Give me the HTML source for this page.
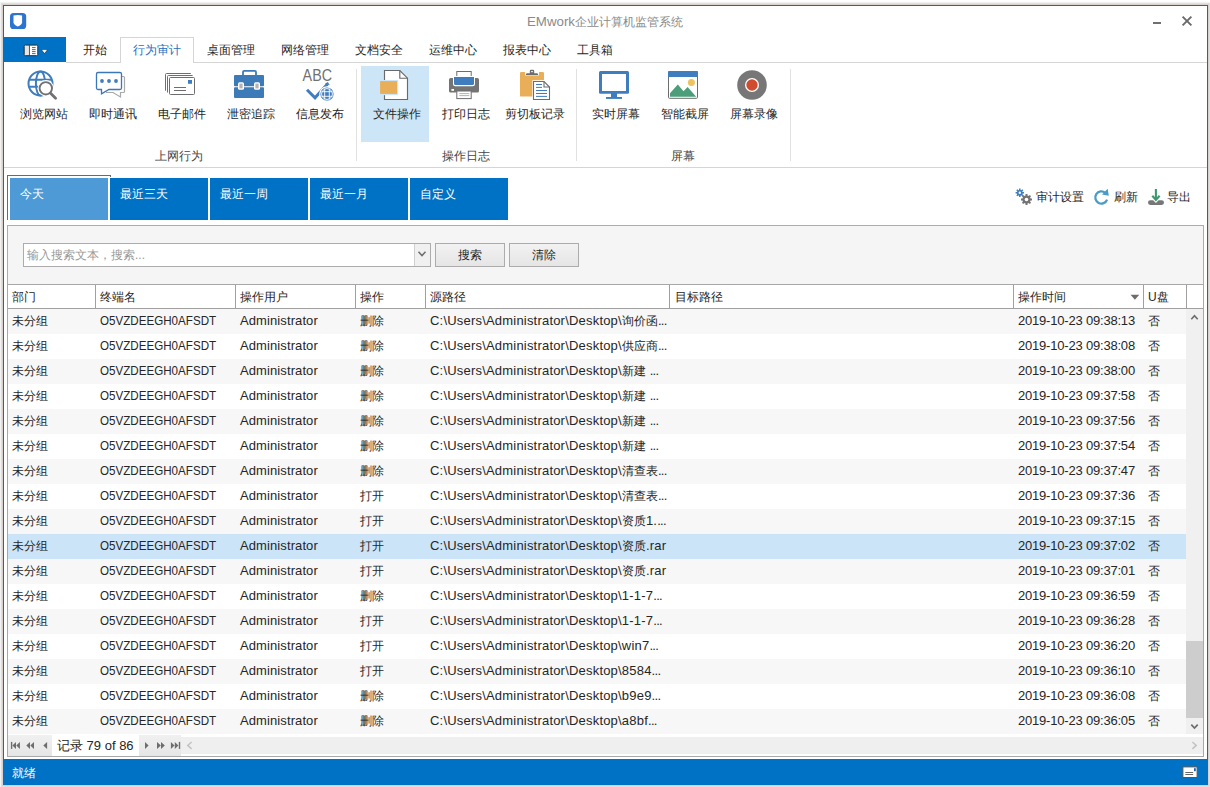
<!DOCTYPE html>
<html><head><meta charset="utf-8">
<style>
*{box-sizing:border-box;margin:0;padding:0}
html,body{width:1210px;height:787px;overflow:hidden;background:#fff}
body{position:relative;font-family:"Liberation Sans",sans-serif;font-size:12px;color:#262626}
.a{position:absolute}
#win{position:absolute;left:3px;top:5px;width:1205px;height:780px;border:1px solid #0072c6;background:#fff;box-shadow:0 0 0 1px #d8d1cd,0 0 0 2px #e0dfde,0 0 1px 3px rgba(0,0,0,.05)}
.t{position:absolute;white-space:nowrap;line-height:14px}
.tab{position:absolute;top:50px;transform:translateY(-50%)}
.rbtn{position:absolute;top:108px;white-space:nowrap;line-height:12px}
.glab{position:absolute;top:150px;line-height:12px;color:#444}
.sep{position:absolute;top:69px;width:1px;height:92px;background:#e1e1e1}
.dtab{position:absolute;top:178px;height:42px;background:#0072c6;color:#fff;padding:9px 0 0 10px;line-height:14px}
.row{position:absolute;left:8px;width:1178px;height:25px}
.row.g{background:#f7f7f7}
.row.s{background:#cce4f7}
.c{position:absolute;top:0;line-height:25px;white-space:nowrap}
.hd{position:absolute;top:286px;height:23px;line-height:23px;white-space:nowrap}
.vs{position:absolute;top:285px;width:1px;height:23px;background:#a0a0a0}
.btn{position:absolute;top:243px;width:70px;height:24px;border:1px solid #acacac;background:linear-gradient(#f2f2f2,#e5e5e5);text-align:center;line-height:22px}
.ol{top:-1px;font-size:13px;transform:scaleX(0.893);transform-origin:0 0}
.ad{top:-1px;font-size:13px;letter-spacing:0.1px}
.pa{top:-1px;font-size:13px;letter-spacing:0.2px}
.pa b{font-weight:normal;letter-spacing:-0.7px}
.pa i{font-style:normal;font-size:12px;letter-spacing:0}
.dt{top:-1px;font-size:13px;letter-spacing:-0.2px}
</style></head><body>
<div id="win"></div>
<!-- title bar -->
<svg class="a" style="left:0;top:0" width="50" height="60" viewBox="0 0 50 60"><rect x="10" y="13" width="16.2" height="16" rx="3.6" fill="#2c74d0"/><path d="M13.5 15.6Q17.8 14.4 22.1 15.6V22.4Q21.6 24.9 17.8 26.4Q14 24.9 13.5 22.4Z" fill="#fff"/></svg>
<div class="t" style="left:527px;top:15px;color:#8a8a8a"><span style="font-size:13.3px">EMwork</span>企业计算机监管系统</div>
<div class="a" style="left:1153px;top:22px;width:8px;height:2px;background:#707070"></div>
<svg class="a" style="left:1181px;top:15px" width="12" height="12" viewBox="0 0 12 12"><path d="M1.6 1.6L10.4 10.4M10.4 1.6L1.6 10.4" stroke="#6a6a6a" stroke-width="1.9"/></svg>
<!-- ribbon tabs -->
<div class="a" style="left:4px;top:37px;width:62px;height:25px;background:#0072c6"></div>
<svg class="a" style="left:0;top:0" width="50" height="60" viewBox="0 0 50 60"><rect x="24.2" y="45.1" width="13.6" height="10.6" rx="1.2" fill="#fff" stroke="#1c2a3a" stroke-width="1"/><path d="M29.3 45.3V55.5" stroke="#333" stroke-width="1"/><rect x="25" y="46" width="3.6" height="9" fill="#e6e6e6"/><path d="M32 47.6H35.6M32 49.6H35.6M32 51.6H35.6M32 53.6H35.6" stroke="#555" stroke-width="0.9"/><path d="M41.3 49.6H47.7L44.5 53.6Z" fill="#fff" stroke="#1c2a3a" stroke-width="0.6"/></svg>
<div class="a" style="left:66px;top:62px;width:1141px;height:1px;background:#d5d5d5"></div>
<div class="a" style="left:120px;top:37px;width:74px;height:26px;border:1px solid #d5d5d5;border-bottom:none;background:#fff"></div>
<div class="t tab" style="left:83px">开始</div>
<div class="t tab" style="left:133px;color:#1e6fc1">行为审计</div>
<div class="t tab" style="left:207px">桌面管理</div>
<div class="t tab" style="left:281px">网络管理</div>
<div class="t tab" style="left:355px">文档安全</div>
<div class="t tab" style="left:429px">运维中心</div>
<div class="t tab" style="left:503px">报表中心</div>
<div class="t tab" style="left:577px">工具箱</div>
<!-- ribbon body -->
<div class="a" style="left:361px;top:66px;width:68px;height:76px;background:#cde6f7"></div>
<div class="rbtn" style="left:20px">浏览网站</div>
<div class="rbtn" style="left:89px">即时通讯</div>
<div class="rbtn" style="left:158px">电子邮件</div>
<div class="rbtn" style="left:227px">泄密追踪</div>
<div class="rbtn" style="left:296px">信息发布</div>
<div class="rbtn" style="left:373px">文件操作</div>
<div class="rbtn" style="left:442px">打印日志</div>
<div class="rbtn" style="left:505px">剪切板记录</div>
<div class="rbtn" style="left:592px">实时屏幕</div>
<div class="rbtn" style="left:661px">智能截屏</div>
<div class="rbtn" style="left:730px">屏幕录像</div>
<div class="glab" style="left:155px">上网行为</div>
<div class="glab" style="left:442px">操作日志</div>
<div class="glab" style="left:671px">屏幕</div>
<div class="sep" style="left:356px"></div>
<div class="sep" style="left:576px"></div>
<div class="sep" style="left:790px"></div>
<div class="a" style="left:4px;top:167px;width:1203px;height:1px;background:#d5d5d5"></div>

<!-- ribbon icons -->
<svg class="a" style="left:0;top:0" width="800" height="110" viewBox="0 0 800 110">
 <g fill="none" stroke="#3f7dbf" stroke-width="2">
  <circle cx="40.5" cy="83.5" r="12"/>
  <ellipse cx="40.5" cy="83.5" rx="4.6" ry="12"/>
  <path d="M29 79.8H52M29 86.8H52"/>
 </g>
 <circle cx="45.8" cy="88.3" r="8.2" fill="#fff"/>
 <circle cx="45.8" cy="88.3" r="6.2" fill="#fff" stroke="#717171" stroke-width="1.9"/>
 <path d="M50.6 93.2L55.6 98.2" stroke="#717171" stroke-width="2.8" stroke-linecap="round"/>

 <path d="M106 92.5H113L120.5 97V92.5H123.5Q124.5 92.5 124.5 91.5V77.5Q124.5 76.5 123.5 76.5H121.7" fill="none" stroke="#a9a9a9" stroke-width="1.2"/>
 <path d="M98 72.5H120Q121.5 72.5 121.5 74V88Q121.5 89.5 120 89.5H109L101.5 93.8V89.5H98Q96.5 89.5 96.5 88V74Q96.5 72.5 98 72.5Z" fill="#fff" stroke="#3a78b8" stroke-width="1.3"/>
 <g fill="#3f7dbf"><circle cx="102" cy="81" r="1.9"/><circle cx="109" cy="81" r="1.9"/><circle cx="116" cy="81" r="1.9"/></g>

 <g fill="none" stroke="#6e6e6e" stroke-width="1">
  <path d="M165.5 90.7V74.5Q165.5 73.5 166.5 73.5H190.8"/>
  <path d="M167.5 92.5V76.5Q167.5 75.5 168.5 75.5H192.6"/>
  <rect x="169.5" y="77.5" width="25" height="17" rx="1" fill="#fff"/>
  <path d="M174 87.5H186M174 90.5H186" stroke-width="1.1"/>
 </g>
 <rect x="188" y="80" width="4" height="3.8" fill="#3f7dbf"/>

 <path d="M243 75V72Q243 70.9 244.2 70.9H254.8Q256 70.9 256 72V75" fill="none" stroke="#3d7ab8" stroke-width="1.8"/>
 <rect x="234" y="75" width="30" height="11.2" rx="1" fill="#3d7ab8"/>
 <rect x="234" y="87.2" width="30" height="10.8" rx="1" fill="#3d7ab8"/>
 <rect x="238" y="82.2" width="6" height="7.6" rx="1.5" fill="#fff"/>
 <rect x="254" y="82.2" width="6" height="7.6" rx="1.5" fill="#fff"/>
 <rect x="239.4" y="83.6" width="3.2" height="4.8" fill="#b3b3b3"/>
 <rect x="255.4" y="83.6" width="3.2" height="4.8" fill="#b3b3b3"/>

 <text x="302.6" y="81.2" font-family="Liberation Sans" font-size="15.6" fill="#707070" textLength="29.4" lengthAdjust="spacingAndGlyphs">ABC</text>
 <path d="M307 89.8L315 97.8L327.5 84" fill="none" stroke="#3f7dbf" stroke-width="3"/>
 <path d="M325 83.8L327.8 82L329.8 85.3Z" fill="#3f7dbf"/>
 <circle cx="327" cy="94" r="7.8" fill="#fff"/>
 <circle cx="327" cy="94" r="6.6" fill="#3f7dbf"/>
 <g stroke="#fff" stroke-width="0.9" fill="none"><path d="M324.7 88.5V99.5M329.3 88.5V99.5M321.5 91.7H332.5M321.5 96.3H332.5"/><circle cx="327" cy="94" r="5.4"/></g>

 <path d="M384.5 70.5H399.8L407.5 78.2V99.5H384.5Z" fill="#fff" stroke="#6a6a6a" stroke-width="1.15"/>
 <path d="M399.8 70.5V78.2H407.5" fill="none" stroke="#6a6a6a" stroke-width="1.15"/>
 <rect x="379" y="80" width="19.2" height="15.2" fill="#cde6f7"/>
 <rect x="380.1" y="81.1" width="16.9" height="12.8" fill="#e8ae58"/>

 <rect x="449" y="78" width="30" height="14.6" rx="1.6" fill="#747474"/>
 <rect x="456.8" y="71.5" width="14.4" height="6.5" fill="#fff" stroke="#6d6d6d" stroke-width="1"/>
 <path d="M453 76H475V84Q475 86.2 472.8 86.2H455.2Q453 86.2 453 84Z" fill="#fff"/>
 <path d="M454 77H474V83.4Q474 85 472.4 85H455.6Q454 85 454 83.4Z" fill="#3f7dbf"/>
 <rect x="451.4" y="89" width="2.6" height="1.8" fill="#fff"/>
 <rect x="456.8" y="91" width="14.4" height="7.6" fill="#fff" stroke="#6d6d6d" stroke-width="1"/>
 <path d="M459.3 93.6H469.3M459.3 95.6H469.3" stroke="#aaa" stroke-width="0.9"/>

 <rect x="520" y="72" width="24" height="24.6" rx="1.2" fill="#e8ae58"/>
 <rect x="525" y="69" width="14" height="6.4" fill="#fff"/>
 <path d="M529.8 73.3V71Q529.8 69.8 531 69.8H533Q534.2 69.8 534.2 71V73.3H537.5L538.3 75H525.7L526.5 73.3Z" fill="#6d6d6d"/>
 <rect x="531.2" y="71" width="1.6" height="1.2" fill="#fff"/>
 <rect x="532.3" y="80.2" width="18.6" height="20.6" fill="#fff"/>
 <path d="M533.5 81.5H544L549.5 87V99.5H533.5Z" fill="#fff" stroke="#6d6d6d" stroke-width="1.1"/>
 <path d="M544 81.5V87H549.5" fill="none" stroke="#6d6d6d" stroke-width="1.1"/>
 <path d="M536 84.5H542M536 87.4H542M536 90.5H547M536 93.5H547M536 96.4H547" stroke="#3f7dbf" stroke-width="1"/>

 <rect x="599" y="71" width="30" height="22.7" rx="1.5" fill="#3f7dbf"/>
 <rect x="602" y="74" width="24" height="17" fill="#fff"/>
 <rect x="611" y="93" width="6" height="4.2" fill="#3f7dbf"/>
 <rect x="606" y="97" width="16" height="1.9" fill="#3f7dbf"/>

 <rect x="668.5" y="71.5" width="29" height="26.8" rx="1" fill="#fff" stroke="#6d6d6d" stroke-width="1"/>
 <path d="M668 77V72Q668 71 669 71H697Q698 71 698 72V77Z" fill="#3f7dbf"/>
 <circle cx="691.4" cy="82.5" r="3.5" fill="#efc35c"/>
 <path d="M670 96.8V93.3L677.8 84.4L683.5 91.2L687.6 87L696.2 96.8Z" fill="#4c9e7b"/>

 <circle cx="752" cy="85" r="14.8" fill="#777"/>
 <circle cx="752" cy="85" r="7" fill="#fff"/>
 <circle cx="752" cy="85" r="5.7" fill="#d04c2f"/>
</svg>

<!-- date tabs -->
<div class="a" style="left:7px;top:175px;width:104px;height:45px;border-top:1px solid #6a6a6a;border-left:1px solid #6a6a6a"></div><div class="a" style="left:110px;top:175px;width:1px;height:2px;background:#6a6a6a"></div>
<div class="dtab" style="left:10px;width:98px;background:#4d9ad6">今天</div>
<div class="dtab" style="left:110px;width:98px">最近三天</div>
<div class="dtab" style="left:210px;width:98px">最近一周</div>
<div class="dtab" style="left:310px;width:98px">最近一月</div>
<div class="dtab" style="left:410px;width:98px">自定义</div>

<!-- right tools -->
<svg class="a" style="left:1000px;top:180px" width="210" height="32" viewBox="1000 180 210 32">
 <g fill="#3f7dbf"><circle cx="1019.8" cy="192.8" r="2.9"/>
  <g stroke="#3f7dbf" stroke-width="1.5"><path d="M1019.8 188.6V197M1015.6 192.8H1024M1016.8 189.8L1022.8 195.8M1022.8 189.8L1016.8 195.8"/></g></g>
 <circle cx="1019.8" cy="192.8" r="1.2" fill="#fff"/>
 <g fill="#747474"><circle cx="1026.5" cy="199.5" r="4.1"/>
  <g stroke="#747474" stroke-width="2"><path d="M1026.5 194V205M1021 199.5H1032M1022.6 195.6L1030.4 203.4M1030.4 195.6L1022.6 203.4"/></g></g>
 <circle cx="1026.5" cy="199.5" r="1.8" fill="#fff"/>
 <path d="M1105.3 192.8A6.1 6.1 0 1 0 1107.1 199.6" fill="none" stroke="#4a9cc7" stroke-width="2.3"/>
 <path d="M1102 194.6L1108.8 195.7L1107.7 188.8Z" fill="#4a9cc7"/>
 <path d="M1148 202.5Q1148 200.2 1150.3 200.2H1153.2L1155.9 203L1158.6 200.2H1161.7Q1164 200.2 1164 202.5Q1164 204.9 1161.7 204.9H1150.3Q1148 204.9 1148 202.5Z" fill="#777"/>
 <path d="M1155.9 189V200M1152.3 195.8L1155.9 199.9L1159.6 195.8" fill="none" stroke="#3a9a6e" stroke-width="2.1"/>
</svg>
<div class="t" style="left:1036px;top:190px">审计设置</div>
<div class="t" style="left:1114px;top:190px">刷新</div>
<div class="t" style="left:1167px;top:190px">导出</div>

<!-- search panel -->
<div class="a" style="left:7px;top:225px;width:1197px;height:60px;border:1px solid #acacac;border-bottom:none;background:#f5f5f5"></div>
<div class="a" style="left:23px;top:243px;width:408px;height:24px;border:1px solid #acacac;background:#fff"></div>
<div class="a" style="left:414px;top:244px;width:16px;height:22px;border-left:1px solid #d0d0d0;background:#f0f0f0"></div>
<svg class="a" style="left:417px;top:250px" width="10" height="8" viewBox="0 0 10 8"><path d="M1.5 1.8L5 5.6L8.5 1.8" fill="none" stroke="#6d6d6d" stroke-width="1.5"/></svg>
<div class="t" style="left:27px;top:248px;color:#999">输入搜索文本，搜索...</div>
<div class="a btn" style="left:435px">搜索</div>
<div class="a btn" style="left:509px">清除</div>

<!-- grid -->
<div class="a" style="left:7px;top:284px;width:1197px;height:473px;border:1px solid #a8a8a8;background:#fff"></div>
<div class="a" style="left:8px;top:308px;width:1195px;height:1px;background:#a0a0a0"></div>
<div class="vs" style="left:95px"></div><div class="vs" style="left:235px"></div><div class="vs" style="left:355px"></div><div class="vs" style="left:425px"></div><div class="vs" style="left:669px"></div><div class="vs" style="left:1013px"></div><div class="vs" style="left:1143px"></div><div class="vs" style="left:1186px"></div>
<div class="hd" style="left:12px">部门</div>
<div class="hd" style="left:100px">终端名</div>
<div class="hd" style="left:240px">操作用户</div>
<div class="hd" style="left:360px">操作</div>
<div class="hd" style="left:430px">源路径</div>
<div class="hd" style="left:675px">目标路径</div>
<div class="hd" style="left:1018px">操作时间</div>
<div class="hd" style="left:1148px">U盘</div>
<svg class="a" style="left:1130px;top:294px" width="10" height="7" viewBox="0 0 10 7"><path d="M0.5 0.8H9.3L4.9 5.8Z" fill="#6d6d6d"/></svg>
<div class="row g" style="top:309px"><span class="c" style="left:4px">未分组</span><span class="c ol" style="left:92px">O5VZDEEGH0AFSDT</span><span class="c ad" style="left:232px">Administrator</span><span class="c" style="left:352px">删除</span><span class="c pa" style="left:422px">C:\Users\Administrator\Desktop\<i>询价函</i><b>...</b></span><span class="c dt" style="left:1010px">2019-10-23 09:38:13</span><span class="c" style="left:1140px">否</span></div>
<div class="row" style="top:334px"><span class="c" style="left:4px">未分组</span><span class="c ol" style="left:92px">O5VZDEEGH0AFSDT</span><span class="c ad" style="left:232px">Administrator</span><span class="c" style="left:352px">删除</span><span class="c pa" style="left:422px">C:\Users\Administrator\Desktop\<i>供应商</i><b>...</b></span><span class="c dt" style="left:1010px">2019-10-23 09:38:08</span><span class="c" style="left:1140px">否</span></div>
<div class="row g" style="top:359px"><span class="c" style="left:4px">未分组</span><span class="c ol" style="left:92px">O5VZDEEGH0AFSDT</span><span class="c ad" style="left:232px">Administrator</span><span class="c" style="left:352px">删除</span><span class="c pa" style="left:422px">C:\Users\Administrator\Desktop\<i>新建</i> <b>...</b></span><span class="c dt" style="left:1010px">2019-10-23 09:38:00</span><span class="c" style="left:1140px">否</span></div>
<div class="row" style="top:384px"><span class="c" style="left:4px">未分组</span><span class="c ol" style="left:92px">O5VZDEEGH0AFSDT</span><span class="c ad" style="left:232px">Administrator</span><span class="c" style="left:352px">删除</span><span class="c pa" style="left:422px">C:\Users\Administrator\Desktop\<i>新建</i> <b>...</b></span><span class="c dt" style="left:1010px">2019-10-23 09:37:58</span><span class="c" style="left:1140px">否</span></div>
<div class="row g" style="top:409px"><span class="c" style="left:4px">未分组</span><span class="c ol" style="left:92px">O5VZDEEGH0AFSDT</span><span class="c ad" style="left:232px">Administrator</span><span class="c" style="left:352px">删除</span><span class="c pa" style="left:422px">C:\Users\Administrator\Desktop\<i>新建</i> <b>...</b></span><span class="c dt" style="left:1010px">2019-10-23 09:37:56</span><span class="c" style="left:1140px">否</span></div>
<div class="row" style="top:434px"><span class="c" style="left:4px">未分组</span><span class="c ol" style="left:92px">O5VZDEEGH0AFSDT</span><span class="c ad" style="left:232px">Administrator</span><span class="c" style="left:352px">删除</span><span class="c pa" style="left:422px">C:\Users\Administrator\Desktop\<i>新建</i> <b>...</b></span><span class="c dt" style="left:1010px">2019-10-23 09:37:54</span><span class="c" style="left:1140px">否</span></div>
<div class="row g" style="top:459px"><span class="c" style="left:4px">未分组</span><span class="c ol" style="left:92px">O5VZDEEGH0AFSDT</span><span class="c ad" style="left:232px">Administrator</span><span class="c" style="left:352px">删除</span><span class="c pa" style="left:422px">C:\Users\Administrator\Desktop\<i>清查表</i><b>...</b></span><span class="c dt" style="left:1010px">2019-10-23 09:37:47</span><span class="c" style="left:1140px">否</span></div>
<div class="row" style="top:484px"><span class="c" style="left:4px">未分组</span><span class="c ol" style="left:92px">O5VZDEEGH0AFSDT</span><span class="c ad" style="left:232px">Administrator</span><span class="c" style="left:352px">打开</span><span class="c pa" style="left:422px">C:\Users\Administrator\Desktop\<i>清查表</i><b>...</b></span><span class="c dt" style="left:1010px">2019-10-23 09:37:36</span><span class="c" style="left:1140px">否</span></div>
<div class="row g" style="top:509px"><span class="c" style="left:4px">未分组</span><span class="c ol" style="left:92px">O5VZDEEGH0AFSDT</span><span class="c ad" style="left:232px">Administrator</span><span class="c" style="left:352px">打开</span><span class="c pa" style="left:422px">C:\Users\Administrator\Desktop\<i>资质</i>1.<b>...</b></span><span class="c dt" style="left:1010px">2019-10-23 09:37:15</span><span class="c" style="left:1140px">否</span></div>
<div class="row s" style="top:534px"><span class="c" style="left:4px">未分组</span><span class="c ol" style="left:92px">O5VZDEEGH0AFSDT</span><span class="c ad" style="left:232px">Administrator</span><span class="c" style="left:352px">打开</span><span class="c pa" style="left:422px">C:\Users\Administrator\Desktop\<i>资质</i>.rar</span><span class="c dt" style="left:1010px">2019-10-23 09:37:02</span><span class="c" style="left:1140px">否</span></div>
<div class="row g" style="top:559px"><span class="c" style="left:4px">未分组</span><span class="c ol" style="left:92px">O5VZDEEGH0AFSDT</span><span class="c ad" style="left:232px">Administrator</span><span class="c" style="left:352px">打开</span><span class="c pa" style="left:422px">C:\Users\Administrator\Desktop\<i>资质</i>.rar</span><span class="c dt" style="left:1010px">2019-10-23 09:37:01</span><span class="c" style="left:1140px">否</span></div>
<div class="row" style="top:584px"><span class="c" style="left:4px">未分组</span><span class="c ol" style="left:92px">O5VZDEEGH0AFSDT</span><span class="c ad" style="left:232px">Administrator</span><span class="c" style="left:352px">删除</span><span class="c pa" style="left:422px">C:\Users\Administrator\Desktop\1-1-7<b>...</b></span><span class="c dt" style="left:1010px">2019-10-23 09:36:59</span><span class="c" style="left:1140px">否</span></div>
<div class="row g" style="top:609px"><span class="c" style="left:4px">未分组</span><span class="c ol" style="left:92px">O5VZDEEGH0AFSDT</span><span class="c ad" style="left:232px">Administrator</span><span class="c" style="left:352px">打开</span><span class="c pa" style="left:422px">C:\Users\Administrator\Desktop\1-1-7<b>...</b></span><span class="c dt" style="left:1010px">2019-10-23 09:36:28</span><span class="c" style="left:1140px">否</span></div>
<div class="row" style="top:634px"><span class="c" style="left:4px">未分组</span><span class="c ol" style="left:92px">O5VZDEEGH0AFSDT</span><span class="c ad" style="left:232px">Administrator</span><span class="c" style="left:352px">打开</span><span class="c pa" style="left:422px">C:\Users\Administrator\Desktop\win7<b>...</b></span><span class="c dt" style="left:1010px">2019-10-23 09:36:20</span><span class="c" style="left:1140px">否</span></div>
<div class="row g" style="top:659px"><span class="c" style="left:4px">未分组</span><span class="c ol" style="left:92px">O5VZDEEGH0AFSDT</span><span class="c ad" style="left:232px">Administrator</span><span class="c" style="left:352px">打开</span><span class="c pa" style="left:422px">C:\Users\Administrator\Desktop\8584<b>...</b></span><span class="c dt" style="left:1010px">2019-10-23 09:36:10</span><span class="c" style="left:1140px">否</span></div>
<div class="row" style="top:684px"><span class="c" style="left:4px">未分组</span><span class="c ol" style="left:92px">O5VZDEEGH0AFSDT</span><span class="c ad" style="left:232px">Administrator</span><span class="c" style="left:352px">删除</span><span class="c pa" style="left:422px">C:\Users\Administrator\Desktop\b9e9<b>...</b></span><span class="c dt" style="left:1010px">2019-10-23 09:36:08</span><span class="c" style="left:1140px">否</span></div>
<div class="row g" style="top:709px"><span class="c" style="left:4px">未分组</span><span class="c ol" style="left:92px">O5VZDEEGH0AFSDT</span><span class="c ad" style="left:232px">Administrator</span><span class="c" style="left:352px">删除</span><span class="c pa" style="left:422px">C:\Users\Administrator\Desktop\a8bf<b>...</b></span><span class="c dt" style="left:1010px">2019-10-23 09:36:05</span><span class="c" style="left:1140px">否</span></div>
<!-- vscroll -->
<div class="a" style="left:1186px;top:309px;width:17px;height:425px;background:#f0f0f0"></div>
<div class="a" style="left:1186px;top:641px;width:17px;height:77px;background:#cdcdcd"></div>
<svg class="a" style="left:1186px;top:309px" width="17" height="17" viewBox="0 0 17 17"><path d="M5.3 10.2L8.5 6.7L11.7 10.2" fill="none" stroke="#6d6d6d" stroke-width="1.7"/></svg>
<svg class="a" style="left:1186px;top:718px" width="17" height="16" viewBox="0 0 17 16"><path d="M5.3 6.6L8.5 10.1L11.7 6.6" fill="none" stroke="#6d6d6d" stroke-width="1.7"/></svg>
<!-- navigator -->
<div class="a" style="left:181px;top:737px;width:1022px;height:17px;background:#efefef"></div>
<div class="a" style="left:8px;top:735px;width:44px;height:21px;background:linear-gradient(#f0f0f0,#e6e6e6)"></div>
<div class="a" style="left:52px;top:735px;width:87px;height:21px;background:#fff"></div>
<div class="a" style="left:139px;top:735px;width:42px;height:21px;background:linear-gradient(#f0f0f0,#e6e6e6)"></div>
<svg class="a" style="left:0;top:735px" width="200" height="21" viewBox="0 735 200 21">
 <g fill="#6d6d6d">
  <rect x="10.9" y="741.9" width="1.4" height="7"/><path d="M16 741.9V748.9L12.4 745.4Z M19.9 741.9V748.9L16.3 745.4Z"/>
  <path d="M30 741.9V748.9L26.3 745.4Z M34 741.9V748.9L30.3 745.4Z"/>
  <path d="M47.1 741.9V748.9L43.3 745.4Z"/>
  <path d="M145 741.9V748.9L148.6 745.4Z"/>
  <path d="M157 741.9V748.9L160.8 745.4Z M161 741.9V748.9L164.8 745.4Z"/>
  <path d="M170.9 741.9V748.9L174.5 745.4Z M174.8 741.9V748.9L178.4 745.4Z"/><rect x="178.8" y="741.9" width="1.4" height="7"/>
 </g>
 <path d="M191.6 742L187.8 745.4L191.6 748.8" fill="none" stroke="#c4c4c4" stroke-width="1.6"/>
</svg>
<svg class="a" style="left:1186px;top:735px" width="17" height="21" viewBox="0 0 17 21"><path d="M6.4 7L10.2 10.4L6.4 13.8" fill="none" stroke="#c4c4c4" stroke-width="1.6"/></svg>
<div class="t" style="left:57px;top:739px;font-size:13px">记录 79 of 86</div>
<!-- status bar -->
<div class="a" style="left:3px;top:759px;width:1205px;height:26px;background:#0072c6"></div>
<div class="t" style="left:12px;top:766px;color:#fff">就绪</div>
<svg class="a" style="left:1180px;top:764px" width="20" height="16" viewBox="0 0 20 16"><rect x="2.9" y="2.9" width="14.2" height="10.6" fill="#fff" stroke="#555" stroke-width="1"/><rect x="14" y="4.2" width="1.8" height="3" fill="#1e5fb0"/><path d="M5.3 8.5H13.2M5.3 10.5H13.2" stroke="#666" stroke-width="1"/></svg>

</body></html>
